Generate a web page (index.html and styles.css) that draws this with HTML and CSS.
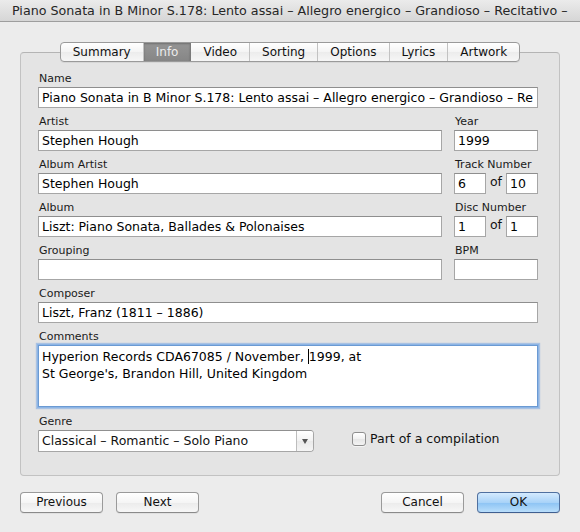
FILE: index.html
```html
<!DOCTYPE html>
<html>
<head>
<meta charset="utf-8">
<link rel="stylesheet" href="styles.css">
</head>
<body>
<div class="window">
  <div class="titlebar">Piano Sonata in B Minor S.178: Lento assai – Allegro energico – Grandioso – Recitativo –</div>
  <div class="content">
    <div class="tabs">
      <div class="tab">Summary</div>
      <div class="tab selected">Info</div>
      <div class="tab">Video</div>
      <div class="tab">Sorting</div>
      <div class="tab">Options</div>
      <div class="tab">Lyrics</div>
      <div class="tab last">Artwork</div>
    </div>
    <div class="box">
      <div class="field full">
        <div class="label">Name</div>
        <div class="input">Piano Sonata in B Minor S.178: Lento assai – Allegro energico – Grandioso – Re</div>
      </div>
      <div class="row">
        <div class="field left">
          <div class="label">Artist</div>
          <div class="input">Stephen Hough</div>
        </div>
        <div class="field right">
          <div class="label">Year</div>
          <div class="input">1999</div>
        </div>
      </div>
      <div class="row">
        <div class="field left">
          <div class="label">Album Artist</div>
          <div class="input">Stephen Hough</div>
        </div>
        <div class="field right">
          <div class="label">Track Number</div>
          <div class="pair">
            <div class="input small">6</div>
            <span class="of">of</span>
            <div class="input small">10</div>
          </div>
        </div>
      </div>
      <div class="row">
        <div class="field left">
          <div class="label">Album</div>
          <div class="input">Liszt: Piano Sonata, Ballades &amp; Polonaises</div>
        </div>
        <div class="field right">
          <div class="label">Disc Number</div>
          <div class="pair">
            <div class="input small">1</div>
            <span class="of">of</span>
            <div class="input small">1</div>
          </div>
        </div>
      </div>
      <div class="row">
        <div class="field left">
          <div class="label">Grouping</div>
          <div class="input"></div>
        </div>
        <div class="field right">
          <div class="label">BPM</div>
          <div class="input"></div>
        </div>
      </div>
      <div class="field full">
        <div class="label">Composer</div>
        <div class="input">Liszt, Franz (1811 – 1886)</div>
      </div>
      <div class="field full">
        <div class="label">Comments</div>
        <div class="textarea">
          <div>Hyperion Records CDA67085 / November, <span class="caret"></span>1999, at</div>
          <div>St George's, Brandon Hill, United Kingdom</div>
        </div>
      </div>
      <div class="genre-row">
        <div class="field">
          <div class="label">Genre</div>
          <div class="combo">
            <div class="combo-text">Classical – Romantic – Solo Piano</div>
            <div class="combo-btn"><span class="tri"></span></div>
          </div>
        </div>
        <div class="check">
          <span class="checkbox"></span>
          <span class="check-label">Part of a compilation</span>
        </div>
      </div>
    </div>
    <div class="buttons">
      <div class="btn">Previous</div>
      <div class="btn">Next</div>
      <div class="spacer"></div>
      <div class="btn">Cancel</div>
      <div class="btn default">OK</div>
    </div>
  </div>
</div>
</body>
</html>
```

FILE: styles.css
```css
html, body {
  margin: 0;
  padding: 0;
  background: #ececec;
}
.window {
  width: 580px;
  height: 532px;
  background: #ececec;
  font-family: "DejaVu Sans", "Liberation Sans", sans-serif;
  color: #111;
  overflow: hidden;
}
.titlebar {
  height: 21px;
  line-height: 21px;
  border-bottom: 1px solid #9e9e9e;
  background: linear-gradient(#ebebeb, #d6d6d6);
  padding-left: 12px;
  font-size: 12.7px;
  color: #262626;
  white-space: nowrap;
  overflow: hidden;
}
.content {
  padding: 20px 20px 0 20px;
}
.tabs {
  position: relative;
  z-index: 1;
  display: flex;
  width: max-content;
  margin: 0 auto -10px auto;
  height: 18px;
  border: 1px solid #9a9a9a;
  border-radius: 4px;
  background: linear-gradient(#ffffff, #f4f4f4 50%, #ececec 51%, #f6f6f6);
  box-shadow: 0 1px 0 rgba(0,0,0,0.06);
  overflow: hidden;
}
.tab {
  padding: 0 12px;
  font-size: 12px;
  line-height: 18px;
  border-right: 1px solid #c2c2c2;
  color: #111;
}
.tab.last {
  border-right: none;
}
.tab.selected {
  background: linear-gradient(#959595, #868686);
  color: #ececec;
  border-right-color: #7a7a7a;
  box-shadow: inset 0 1px 2px rgba(0,0,0,0.25);
}
.box {
  border: 1px solid #c2c2c2;
  border-top-color: #b4b4b4;
  border-radius: 4px;
  background: #e4e4e4;
  padding: 19px 21px 23px 17px;
  display: flex;
  flex-direction: column;
  gap: 7px;
}
.row {
  display: flex;
  gap: 12px;
}
.field {
  display: flex;
  flex-direction: column;
}
.field.left {
  width: 404px;
}
.field.right {
  width: 84px;
}
.label {
  font-size: 11px;
  line-height: 13px;
  height: 13px;
  margin-bottom: 2px;
  padding-left: 1px;
  color: #1a1a1a;
}
.input {
  box-sizing: border-box;
  height: 21px;
  background: #fff;
  border: 1px solid #a6a6a6;
  border-top-color: #8e8e8e;
  font-size: 12.5px;
  line-height: 19px;
  padding: 0 3px;
  white-space: nowrap;
  overflow: hidden;
  color: #000;
}
.pair {
  display: flex;
  align-items: flex-start;
}
.input.small {
  width: 32px;
}
.of {
  width: 20px;
  text-align: center;
  font-size: 12.5px;
  line-height: 17px;
}
.textarea {
  box-sizing: border-box;
  height: 62px;
  background: #fff;
  border: 1px solid #6b9ad3;
  box-shadow: 0 0 0 1px #8db5e5, 0 0 1px 2px rgba(120,165,225,0.55);
  font-size: 12.5px;
  line-height: 17px;
  padding: 2px 3px 0 3px;
  color: #000;
}
.caret {
  display: inline-block;
  width: 1px;
  height: 15px;
  background: #000;
  vertical-align: -3px;
}
.genre-row {
  display: flex;
  align-items: flex-end;
  margin-top: 1px;
}
.combo {
  display: flex;
  width: 276px;
  height: 22px;
  box-sizing: border-box;
  border: 1px solid #a6a6a6;
  border-top-color: #909090;
  border-radius: 0 4px 4px 0;
  background: #fff;
  overflow: hidden;
}
.combo-text {
  flex: 1;
  font-size: 12.5px;
  line-height: 20px;
  padding-left: 3px;
  white-space: nowrap;
  overflow: hidden;
}
.combo-btn {
  width: 16px;
  border-left: 1px solid #bdbdbd;
  background: linear-gradient(#ffffff, #f2f2f2 50%, #eaeaea 51%, #f5f5f5);
  display: flex;
  align-items: center;
  justify-content: center;
}
.tri {
  width: 0;
  height: 0;
  border-left: 3.5px solid transparent;
  border-right: 3.5px solid transparent;
  border-top: 5px solid #555;
}
.check {
  display: flex;
  align-items: center;
  margin-left: 38px;
  margin-bottom: 6px;
}
.checkbox {
  box-sizing: border-box;
  width: 14px;
  height: 14px;
  border: 1px solid #8e8e8e;
  border-radius: 3px;
  background: linear-gradient(#ffffff, #f0f0f0 50%, #e6e6e6 51%, #f3f3f3);
  box-shadow: 0 1px 0 rgba(255,255,255,0.6);
}
.check-label {
  margin-left: 4px;
  font-size: 12.5px;
  line-height: 15px;
}
.buttons {
  display: flex;
  gap: 13px;
  margin-top: 16px;
}
.spacer {
  flex: 1;
}
.btn {
  box-sizing: border-box;
  width: 83px;
  height: 21px;
  border: 1px solid #9a9a9a;
  border-bottom-color: #8a8a8a;
  border-radius: 4px;
  background: linear-gradient(#ffffff, #f5f5f5 50%, #ebebeb 51%, #f7f7f7);
  font-size: 12px;
  line-height: 19px;
  text-align: center;
  color: #111;
  box-shadow: 0 1px 0 rgba(0,0,0,0.05);
}
.btn.default {
  border-color: #50709f;
  border-bottom-color: #3f5f90;
  background: linear-gradient(#d4eafe, #a9d3f8 50%, #8cc3f4 51%, #b9defb);
}
```
